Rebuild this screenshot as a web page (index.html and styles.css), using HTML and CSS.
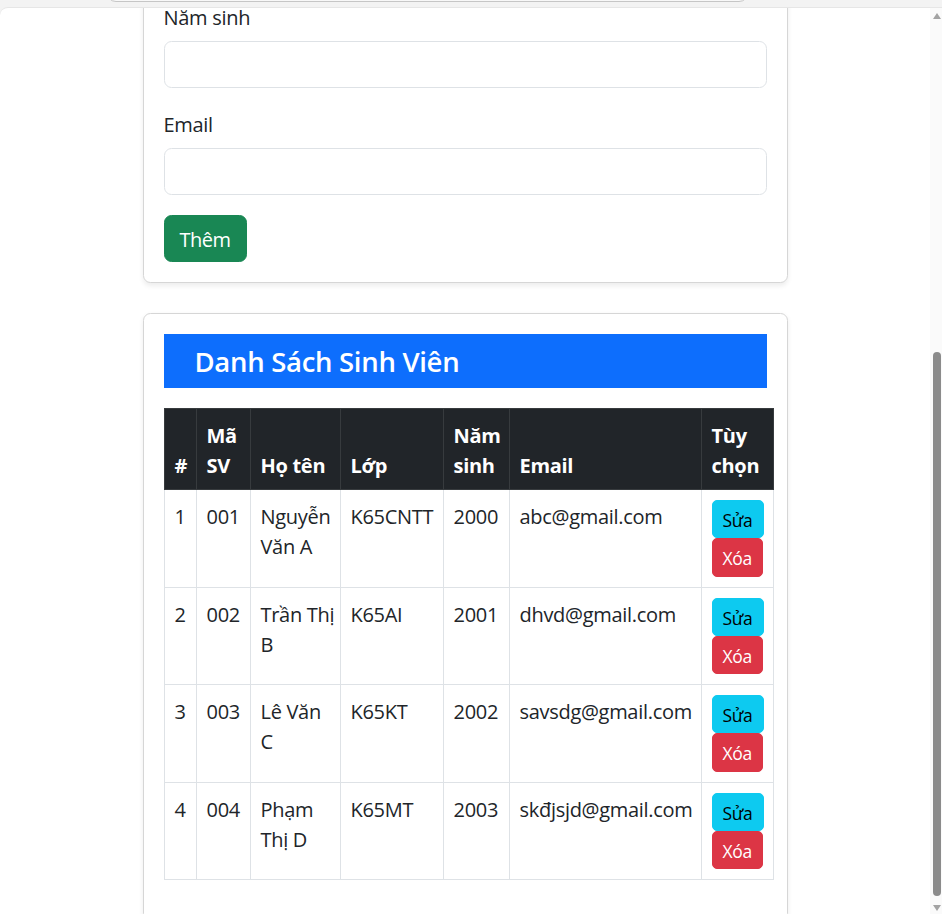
FILE: index.html
```html
<!DOCTYPE html>
<html lang="vi">
<head>
<meta charset="utf-8">
<title>Danh Sách Sinh Viên</title>
<link rel="stylesheet" href="styles.css">
</head>
<body>
<div class="browser">
  <div class="chrome"><div class="omnibox"></div></div>
  <div class="viewport">
    <main class="page">
      <div class="container">
        <section class="card form-card">
          <div class="field">
            <label class="form-label">Năm sinh</label>
            <input class="form-control" type="text">
          </div>
          <div class="field">
            <label class="form-label">Email</label>
            <input class="form-control" type="email">
          </div>
          <button class="btn btn-success" type="button">Thêm</button>
        </section>

        <section class="card list-card">
          <h4 class="list-title">Danh Sách Sinh Viên</h4>
          <table class="students">
            <colgroup>
              <col class="c-idx"><col class="c-code"><col class="c-name"><col class="c-class"><col class="c-year"><col class="c-email"><col class="c-act">
            </colgroup>
            <thead>
              <tr>
                <th>#</th><th>Mã SV</th><th>Họ tên</th><th>Lớp</th><th>Năm sinh</th><th>Email</th><th>Tùy chọn</th>
              </tr>
            </thead>
            <tbody>
              <tr>
                <td>1</td><td>001</td><td class="name">Nguyễn Văn A</td><td>K65CNTT</td><td>2000</td><td>abc@gmail.com</td>
                <td class="act"><div class="actions"><button class="btn btn-sm btn-info" type="button">Sửa</button><button class="btn btn-sm btn-danger" type="button">Xóa</button></div></td>
              </tr>
              <tr>
                <td>2</td><td>002</td><td class="name">Trần Thị B</td><td>K65AI</td><td>2001</td><td>dhvd@gmail.com</td>
                <td class="act"><div class="actions"><button class="btn btn-sm btn-info" type="button">Sửa</button><button class="btn btn-sm btn-danger" type="button">Xóa</button></div></td>
              </tr>
              <tr>
                <td>3</td><td>003</td><td class="name">Lê Văn C</td><td>K65KT</td><td>2002</td><td>savsdg@gmail.com</td>
                <td class="act"><div class="actions"><button class="btn btn-sm btn-info" type="button">Sửa</button><button class="btn btn-sm btn-danger" type="button">Xóa</button></div></td>
              </tr>
              <tr>
                <td>4</td><td>004</td><td class="name">Phạm Thị D</td><td>K65MT</td><td>2003</td><td>skđjsjd@gmail.com</td>
                <td class="act"><div class="actions"><button class="btn btn-sm btn-info" type="button">Sửa</button><button class="btn btn-sm btn-danger" type="button">Xóa</button></div></td>
              </tr>
            </tbody>
          </table>
        </section>
      </div>
    </main>
    <div class="scrollbar">
      <div class="arrow-up"></div>
      <div class="lower">
        <div class="thumb"></div>
        <div class="arrow-down"></div>
      </div>
    </div>
  </div>
</div>
</body>
</html>
```

FILE: styles.css
```css
html, body {
  margin: 0;
  padding: 0;
  height: 914px;
  overflow: hidden;
}

body {
  font-family: "Open Sans", "Noto Sans", sans-serif;
  font-size: 20px;
  letter-spacing: -0.3px;
  color: #212529;
  background: #f3f3f3;
}

.browser {
  height: 914px;
  display: flex;
  flex-direction: column;
  background: #f3f3f3;
}

.chrome {
  height: 7px;
  flex: none;
  overflow: hidden;
}

.omnibox {
  margin: -20px 0 0 106px;
  width: 643px;
  height: 22px;
  box-sizing: border-box;
  border: 1px solid #c6c6c6;
  border-radius: 10px;
  background: #f8f8f8;
}

.viewport {
  flex: 1;
  min-height: 0;
  display: flex;
  background: #fff;
  border-top: 1px solid #e6e6e6;
  border-top-left-radius: 8px;
  overflow: hidden;
}

.page {
  flex: 1;
  min-width: 0;
  overflow: hidden;
}

.container {
  width: 645px;
  margin: -28px auto 0;
}

.card {
  box-sizing: border-box;
  background: #fff;
  border: 1px solid #d6d6d6;
  border-radius: 7.5px;
  padding: 20px;
  box-shadow: 0 2.5px 5px rgba(0, 0, 0, 0.075);
}

.field {
  margin-bottom: 20px;
}

.form-label {
  display: block;
  padding-top: 2px;
  margin-bottom: 8px;
  line-height: 30px;
}

.form-control {
  display: block;
  width: 100%;
  height: 47px;
  box-sizing: border-box;
  border: 1px solid #dee2e6;
  border-radius: 7.5px;
  padding: 7px 15px;
  font: inherit;
  background: #fff;
}

.btn {
  display: inline-block;
  font-family: inherit;
  letter-spacing: inherit;
  border: 1px solid transparent;
  cursor: pointer;
}

.btn-success {
  background: #198754;
  border-color: #198754;
  color: #fff;
  font-size: 20px;
  letter-spacing: -0.5px;
  line-height: 30px;
  height: 47px;
  padding: 9px 15px 6px;
  border-radius: 7.5px;
}

.list-card {
  margin-top: 30px;
}

.list-title {
  margin: 0 0 20px;
  background: #0d6efd;
  color: #fff;
  font-size: 27.5px;
  font-weight: 600;
  line-height: 36px;
  padding: 10px 31px 8px;
}

.students {
  border-collapse: collapse;
  table-layout: fixed;
  width: 610px;
  margin-bottom: 20px;
}

.c-idx { width: 32px; }
.c-code { width: 54px; }
.c-name { width: 90px; }
.c-class { width: 103px; }
.c-year { width: 66px; }
.c-email { width: 192px; }
.c-act { width: 72px; }

.students th,
.students td {
  padding: 12px 10px 8px;
  border: 1px solid #dee2e6;
  line-height: 30px;
  text-align: left;
}

.students thead th {
  background: #212529;
  color: #fff;
  border-color: #373b3e;
  vertical-align: bottom;
  font-weight: 700;
}

.students tbody td {
  vertical-align: top;
  background: #fff;
}

.students td.name {
  padding-right: 4px;
}

.students td.act {
  padding-top: 10px;
  padding-bottom: 10px;
}

.actions {
  display: flex;
  flex-direction: column;
  align-items: flex-start;
}

.btn-sm {
  font-size: 17.5px;
  line-height: 26.25px;
  padding: 6px 10px 4px;
  border-radius: 5px;
}

.btn-info {
  background: #0dcaf0;
  border-color: #0dcaf0;
  color: #000;
}

.btn-danger {
  background: #dc3545;
  border-color: #dc3545;
  color: #fff;
}

.scrollbar {
  width: 12px;
  flex: none;
  background: #fafafa;
  display: flex;
  flex-direction: column;
  justify-content: space-between;
}

.arrow-up {
  width: 0;
  height: 0;
  margin: 5px 0 0 3px;
  border-left: 4px solid transparent;
  border-right: 4px solid transparent;
  border-bottom: 6px solid #a3a3a3;
}

.lower {
  display: flex;
  flex-direction: column;
}

.thumb {
  width: 8px;
  height: 544px;
  margin-left: 3px;
  border-radius: 4px;
  background: #8b8b8b;
}

.arrow-down {
  width: 0;
  height: 0;
  margin: 9px 0 3px 3px;
  border-left: 4px solid transparent;
  border-right: 4px solid transparent;
  border-top: 6px solid #a3a3a3;
}
```
